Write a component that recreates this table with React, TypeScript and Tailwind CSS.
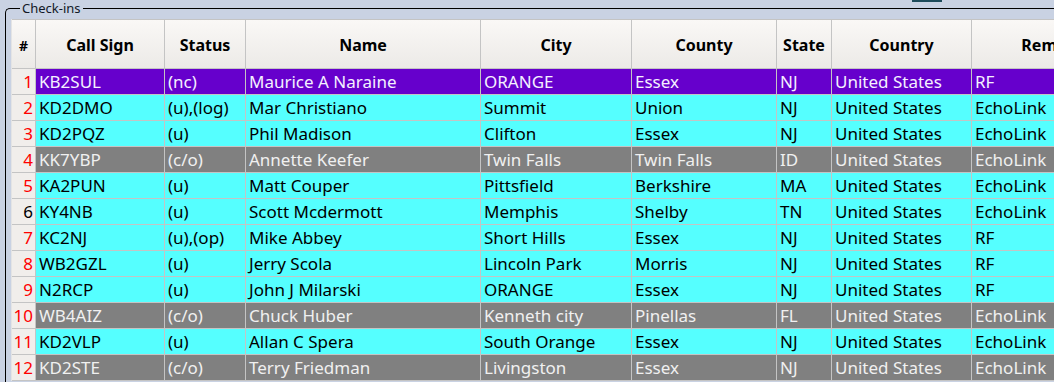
import React from "react";

type Kind = "nc" | "u" | "co";

interface CheckIn {
    call: string;
    status: string;
    name: string;
    city: string;
    county: string;
    state: string;
    country: string;
    remarks: string;
    kind: Kind;
    plainNumber?: boolean;
}

const checkIns: CheckIn[] = [
    {call: "KB2SUL", status: "(nc)", name: "Maurice A Naraine", city: "ORANGE", county: "Essex", state: "NJ", country: "United States", remarks: "RF", kind: "nc"},
    {call: "KD2DMO", status: "(u),(log)", name: "Mar Christiano", city: "Summit", county: "Union", state: "NJ", country: "United States", remarks: "EchoLink", kind: "u"},
    {call: "KD2PQZ", status: "(u)", name: "Phil Madison", city: "Clifton", county: "Essex", state: "NJ", country: "United States", remarks: "EchoLink", kind: "u"},
    {call: "KK7YBP", status: "(c/o)", name: "Annette Keefer", city: "Twin Falls", county: "Twin Falls", state: "ID", country: "United States", remarks: "EchoLink", kind: "co"},
    {call: "KA2PUN", status: "(u)", name: "Matt Couper", city: "Pittsfield", county: "Berkshire", state: "MA", country: "United States", remarks: "EchoLink", kind: "u"},
    {call: "KY4NB", status: "(u)", name: "Scott Mcdermott", city: "Memphis", county: "Shelby", state: "TN", country: "United States", remarks: "EchoLink", kind: "u", plainNumber: true},
    {call: "KC2NJ", status: "(u),(op)", name: "Mike Abbey", city: "Short Hills", county: "Essex", state: "NJ", country: "United States", remarks: "RF", kind: "u"},
    {call: "WB2GZL", status: "(u)", name: "Jerry Scola", city: "Lincoln Park", county: "Morris", state: "NJ", country: "United States", remarks: "RF", kind: "u"},
    {call: "N2RCP", status: "(u)", name: "John J Milarski", city: "ORANGE", county: "Essex", state: "NJ", country: "United States", remarks: "RF", kind: "u"},
    {call: "WB4AIZ", status: "(c/o)", name: "Chuck Huber", city: "Kenneth city", county: "Pinellas", state: "FL", country: "United States", remarks: "EchoLink", kind: "co"},
    {call: "KD2VLP", status: "(u)", name: "Allan C Spera", city: "South Orange", county: "Essex", state: "NJ", country: "United States", remarks: "EchoLink", kind: "u"},
    {call: "KD2STE", status: "(c/o)", name: "Terry Friedman", city: "Livingston", county: "Essex", state: "NJ", country: "United States", remarks: "EchoLink", kind: "co"},
];

// column widths include the 1px right grid line
const columns = [
    {label: "Call Sign", key: "call", width: "w-[129px]"},
    {label: "Status", key: "status", width: "w-[81px]"},
    {label: "Name", key: "name", width: "w-[235px]"},
    {label: "City", key: "city", width: "w-[151px]"},
    {label: "County", key: "county", width: "w-[145px]"},
    {label: "State", key: "state", width: "w-[55px]"},
    {label: "Country", key: "country", width: "w-[140px]"},
    {label: "Remarks", key: "remarks", width: "w-[170px]"},
] as const;

const rowStyles: Record<Kind, string> = {
    nc: "bg-[#6600cc] text-[#f4f0ff]",
    u: "bg-[#55ffff] text-black",
    co: "bg-[#808080] text-[#f0f0f0]",
};

export default function App() {
    return (
        <div
            className="relative w-[1054px] h-[382px] overflow-hidden bg-[#c9d2e3]"
            style={{fontFamily: '"Noto Sans", "Open Sans", sans-serif'}}
        >
            {/* bit of the widget above, cut off */}
            <div className="absolute left-[912px] top-0 w-[30px] h-[2px] bg-[#1d4b5b]" />

            <fieldset className="ml-[5px] w-[1100px] h-[420px] border-t border-l border-black rounded-tl-[5px] p-0 pl-[5px] m-0">
                <legend className="ml-[9px] px-[2px] pt-[1px] text-[13px] leading-[15px] text-[#111827]">Check-ins</legend>

                <div className="mt-[3px] border-l border-[#e4e4e4] text-[17px]">
                    {/* HEADER */}
                    <div className="flex h-[50px] border-t border-b border-[#c4c4c4] bg-gradient-to-b from-[#faf8f6] to-[#eceae7] font-bold text-[16px] text-black">
                        <div className="w-[24px] shrink-0 border-r border-[#c4c4c4] flex items-center justify-center pt-[2px] text-[14px]">#</div>
                        {columns.map((c) => (
                            <div key={c.key} className={`${c.width} shrink-0 border-r border-[#c4c4c4] flex items-center justify-center pt-[2px]`}>
                                {c.label}
                            </div>
                        ))}
                    </div>

                    {/* ROWS */}
                    {checkIns.map((r, i) => (
                        <div key={r.call} className="flex h-[26px] border-b border-[#c4c4c4]">
                            <div
                                className={`w-[24px] shrink-0 border-r border-[#c4c4c4] bg-[#f1eeeb] flex items-center justify-end pr-[2px] ${
                                    r.plainNumber ? "text-black" : "text-[#ff0000]"
                                }`}
                            >
                                {i + 1}
                            </div>
                            {columns.map((c) => (
                                <div
                                    key={c.key}
                                    className={`${c.width} shrink-0 border-r border-[#c4c4c4] flex items-center pl-[3px] whitespace-nowrap overflow-hidden ${rowStyles[r.kind]}`}
                                >
                                    {r[c.key]}
                                </div>
                            ))}
                        </div>
                    ))}
                </div>
            </fieldset>
        </div>
    );
}
